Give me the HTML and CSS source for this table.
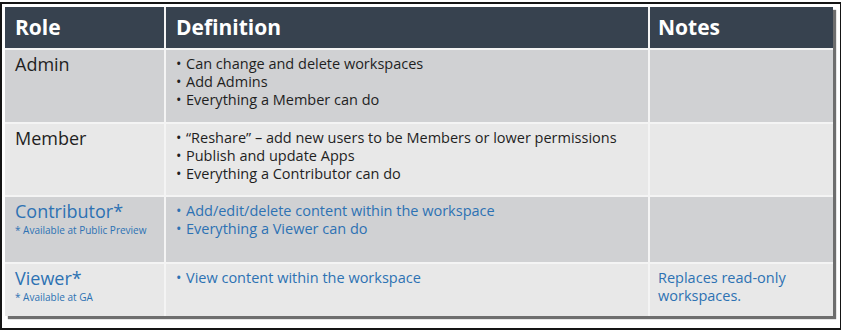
FILE: index.html
```html
<!DOCTYPE html>
<html>
<head>
<meta charset="utf-8">
<link rel="stylesheet" href="styles.css">
</head>
<body>
<div class="frame">
  <div class="table">
    <div class="cell head">Role</div>
    <div class="cell head">Definition</div>
    <div class="cell head notes-head">Notes</div>

    <div class="cell dark role">Admin</div>
    <div class="cell dark"><ul class="list"><li>Can change and delete workspaces</li><li>Add Admins</li><li>Everything a Member can do</li></ul></div>
    <div class="cell dark"></div>

    <div class="cell light role">Member</div>
    <div class="cell light"><ul class="list"><li>“Reshare” – add new users to be Members or lower permissions</li><li>Publish and update Apps</li><li>Everything a Contributor can do</li></ul></div>
    <div class="cell light"></div>

    <div class="cell dark role blue"><div class="title">Contributor*</div><div class="foot">* Available at Public Preview</div></div>
    <div class="cell dark blue"><ul class="list"><li>Add/edit/delete content within the workspace</li><li>Everything a Viewer can do</li></ul></div>
    <div class="cell dark"></div>

    <div class="cell light role blue"><div class="title">Viewer*</div><div class="foot">* Available at GA</div></div>
    <div class="cell light blue"><ul class="list"><li>View content within the workspace</li></ul></div>
    <div class="cell light blue notes">Replaces read-only workspaces.</div>
  </div>
</div>
</body>
</html>
```

FILE: styles.css
```css
html, body {
  margin: 0;
  padding: 0;
  background: #ffffff;
}
body {
  font-family: "Open Sans", "Noto Sans", sans-serif;
  color: #1f1f1f;
}
.frame {
  margin-top: 2px;
  width: 835px;
  height: 321px;
  border: 2px solid #151515;
  padding: 3px 0 0 3px;
}
.table {
  display: grid;
  grid-template-columns: 159px 482px 183px;
  grid-template-rows: 41px 72px 71px 65px 52px;
  column-gap: 2px;
  row-gap: 2px;
  width: 828px;
  background: #f4f4f4;
  box-shadow: 3px 3px 1px #6e6e6e;
}
.cell {
  padding: 0 0 0 10px;
}
.head {
  background: #37424f;
  color: #ffffff;
  font-weight: 700;
  font-size: 21px;
  line-height: 40px;
}
.notes-head { padding-left: 8px; }
.dark { background: #d0d1d3; }
.light { background: #e8e8e8; }
.role {
  font-size: 18px;
  line-height: 25px;
  padding-top: 2px;
}
.blue { color: #2d72b3; }
.foot {
  font-size: 10px;
  line-height: 13px;
}
.list {
  margin: 0;
  padding: 5px 0 0 0;
  list-style: none;
  font-size: 14.5px;
  line-height: 18px;
}
.list li {
  position: relative;
  padding-left: 10px;
}
.list li::before {
  content: "•";
  position: absolute;
  left: 0;
  top: 0;
}
.notes {
  font-size: 14.5px;
  line-height: 18px;
  padding-top: 5px;
  padding-left: 8px;
  padding-right: 10px;
}
```
